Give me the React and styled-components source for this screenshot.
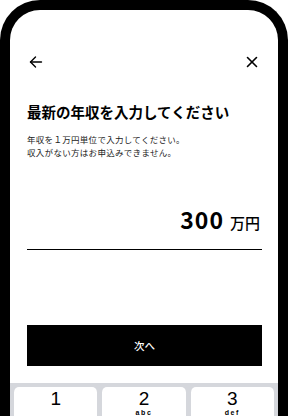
import React from 'react'
import styled, { createGlobalStyle } from 'styled-components'

const GlobalStyle = createGlobalStyle`
  html, body {
    margin: 0;
    padding: 0;
    background: #ffffff;
    overflow: hidden;
  }
  body {
    font-family: "Noto Sans CJK JP", "Noto Sans", sans-serif;
    color: #000000;
  }
`

const keys = [
  { d: '1', l: '' },
  { d: '2', l: 'abc' },
  { d: '3', l: 'def' },
  { d: '4', l: 'ghi' },
  { d: '5', l: 'jkl' },
  { d: '6', l: 'mno' },
]

function App() {
  return (
    <>
      <GlobalStyle />
      <Phone>
        <Screen>
          <Body>
            <Header>
              <IconButton aria-label="戻る">
                <svg width="14" height="14" viewBox="0 0 14 14" fill="none" stroke="#000" strokeWidth="1.4" strokeLinecap="round" strokeLinejoin="round">
                  <path d="M12.5 7H1.5" />
                  <path d="M6.5 2L1.5 7L6.5 12" />
                </svg>
              </IconButton>
              <IconButton aria-label="閉じる">
                <svg width="12" height="12" viewBox="0 0 12 12" fill="none" stroke="#000" strokeWidth="1.6" strokeLinecap="round">
                  <path d="M1.5 1.5L10.5 10.5" />
                  <path d="M10.5 1.5L1.5 10.5" />
                </svg>
              </IconButton>
            </Header>
            <Title>最新の年収を入力してください</Title>
            <Note>
              年収を１万円単位で入力してください。<br />
              収入がない方はお申込みできません。
            </Note>
            <AmountRow>
              <Amount>300</Amount>
              <Unit>万円</Unit>
            </AmountRow>
            <NextButton>次へ</NextButton>
          </Body>
          <Keypad>
            {keys.map((k) => (
              <Key key={k.d}>
                <Digit>{k.d}</Digit>
                <Letters>{k.l}</Letters>
              </Key>
            ))}
          </Keypad>
        </Screen>
      </Phone>
    </>
  )
}

export default App

const Phone = styled.div`
  width: 288px;
  height: 470px;
  box-sizing: border-box;
  border: 10px solid #000000;
  border-bottom: none;
  border-radius: 40px 40px 0 0;
  overflow: hidden;
  background: #ffffff;
`

const Screen = styled.div`
  display: flex;
  flex-direction: column;
`

const Body = styled.div`
  display: flex;
  flex-direction: column;
  padding: 40px 16px 17px 17px;
`

const Header = styled.div`
  height: 24px;
  display: flex;
  align-items: center;
  justify-content: space-between;
  padding: 0 4px 0 2px;
`

const IconButton = styled.span`
  display: flex;
  align-items: center;
  justify-content: center;
`

const Title = styled.h1`
  margin: 28px 0 0;
  font-size: 14.5px;
  line-height: 20px;
  font-weight: 700;
  letter-spacing: 0;
`

const Note = styled.p`
  margin: 11px 0 0;
  font-size: 8.5px;
  line-height: 13px;
  letter-spacing: 0.3px;
  color: #222222;
`

const AmountRow = styled.div`
  margin-top: 45px;
  display: flex;
  justify-content: flex-end;
  align-items: baseline;
  gap: 6px;
  padding: 0 2px 15px 0;
  border-bottom: 1.5px solid #000000;
`

const Amount = styled.span`
  font-size: 23px;
  line-height: 30px;
  font-weight: 700;
  letter-spacing: 1px;
`

const Unit = styled.span`
  font-size: 15px;
  font-weight: 500;
`

const NextButton = styled.button`
  margin-top: 75px;
  height: 41px;
  border: none;
  background: #000000;
  color: #ffffff;
  font-family: "Noto Sans CJK JP", sans-serif;
  font-size: 10.5px;
  font-weight: 500;
`

const Keypad = styled.div`
  background: #d5d7dc;
  padding: 4px;
  display: grid;
  grid-template-columns: repeat(3, 1fr);
  gap: 5px;
`

const Key = styled.div`
  background: #ffffff;
  border-radius: 5px;
  height: 42px;
  display: flex;
  flex-direction: column;
  align-items: center;
  padding-top: 2px;
  box-sizing: border-box;
  box-shadow: 0 1px 0 #a0a3a8;
  color: #000000;
`

const Digit = styled.span`
  font-family: "Liberation Sans", Arial, sans-serif;
  font-size: 19px;
  line-height: 19px;
`

const Letters = styled.span`
  font-family: "Liberation Sans", Arial, sans-serif;
  font-size: 7px;
  font-weight: 700;
  letter-spacing: 1.6px;
  line-height: 9px;
  color: #000000;
`
